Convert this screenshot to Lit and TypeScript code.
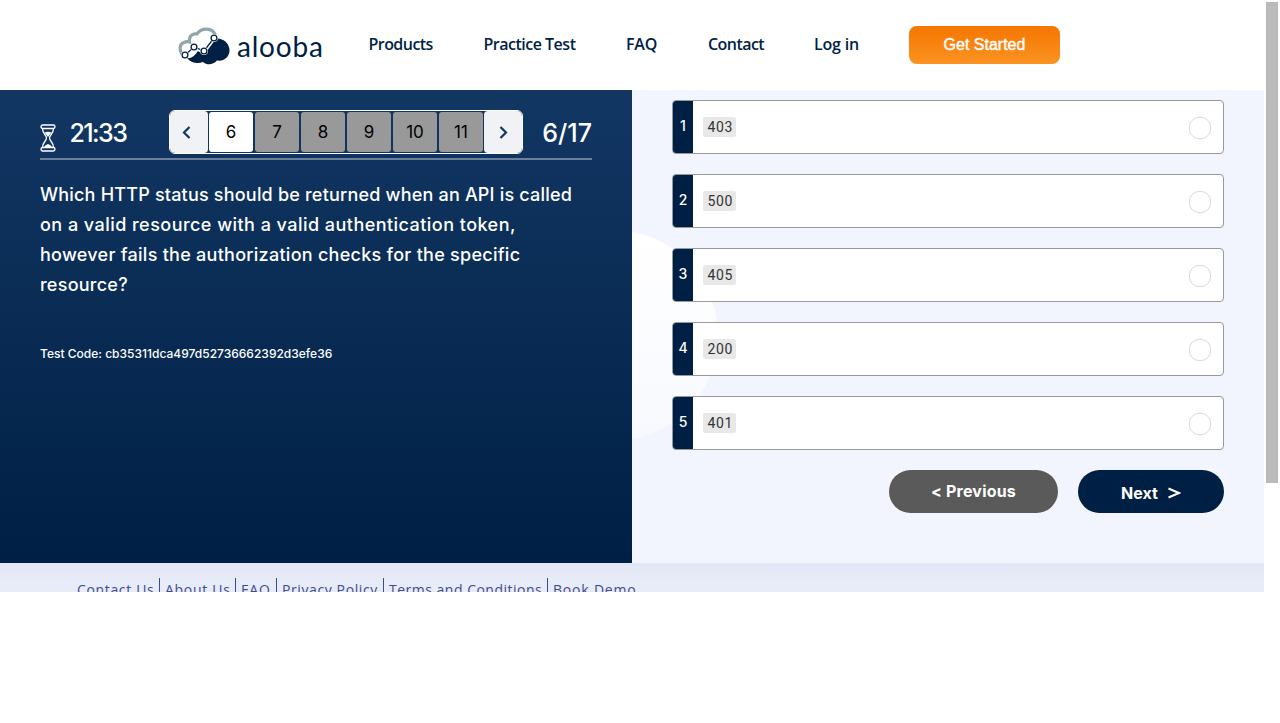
import { LitElement, html, css, svg } from "lit";
import { customElement } from "lit/decorators.js";

@customElement("app-header")
class AppHeader extends LitElement {
  static styles = css`
    :host { display: flex; height: 90px; background: #fff; box-sizing: border-box; padding-left: 178px; align-items: center; color: #001f44; }
    .logo { display: flex; align-items: center; width: 190.5px; padding-top: 1px; }
    .mark { width: 52px; height: 40px; display: block; }
    .word { font: 400 28px/40px Lato, sans-serif; letter-spacing: 0.8px; margin: 1px 0 0 7px; }
    nav { display: flex; font: 600 16px/24px "Open Sans", sans-serif; gap: 50px; padding-bottom: 2px; white-space: nowrap; }
    .n1 { width: 65px; letter-spacing: -0.55px; } .n2 { width: 92.5px; letter-spacing: -0.5px; }
    .n3 { width: 32px; letter-spacing: -0.2px; } .n4 { width: 56px; letter-spacing: -0.55px; } .n5 { width: 45px; letter-spacing: -0.2px; }
    .cta { margin-left: 50px; width: 151px; height: 38px; border: 0; padding: 0; border-radius: 8px; color: #fff; background: linear-gradient(#f57600, #fb9322); font: 400 16px "Liberation Sans", sans-serif; -webkit-text-stroke: 0.4px #fff; }
  `;
  render() {
    return html`
      <div class="logo">
        <svg class="mark" viewBox="0 0 52 40">
          <path d="M5 29C1 25 1 18 6 16.500C8 15.500 10 15.500 11.500 16C10.500 10 15 7 19 8C23 1.500 34 1 37.500 9" fill="none" stroke="#90a4ab" stroke-width="3.200"/>
          <path d="M9 32C14 33 17 29 20 25L26 28L34 17L39 12.500C46 12.500 51.500 18 51.500 24.500C51.500 31 46 35.500 39 34.500C35 39 29 39.500 25 36C19 38 13 37 9 32Z" fill="#001f44"/>
          <path d="M7 29L16 21L26 25L36 12" fill="none" stroke="#fff" stroke-width="4.500"/>
          <path d="M7 29L16 21L26 25L36 12" fill="none" stroke="#001f44" stroke-width="1.300"/>
          ${[[7, 29], [16, 21], [26, 25], [36, 12]].map(([x, y]) => svg`<circle cx=${x} cy=${y} r="4" fill="#fff"/><circle cx=${x} cy=${y} r="2.9" fill="#fff" stroke="#001f44" stroke-width="1.3"/>`)}
        </svg>
        <span class="word">alooba</span>
      </div>
      <nav><span class="n1">Products</span><span class="n2">Practice Test</span><span class="n3">FAQ</span><span class="n4">Contact</span><span class="n5">Log in</span></nav>
      <button class="cta">Get Started</button>`;
  }
}

@customElement("question-panel")
class QuestionPanel extends LitElement {
  static styles = css`
    :host { display: block; width: 632px; height: 473px; box-sizing: border-box; padding: 20px 40px 0; color: #fff; background: linear-gradient(#123763, #001f44); font-family: Inter, sans-serif; white-space: nowrap; }
    .bar { display: flex; height: 50px; border-bottom: 2px solid #6b809b; box-sizing: border-box; }
    .glass { width: 16px; height: 28px; margin-top: 14px; }
    .time { margin-left: 13.5px; width: 99.5px; font: 500 25px/46px Inter, sans-serif; letter-spacing: -1.6px; }
    .pager { display: flex; width: 354px; height: 44px; box-sizing: border-box; border: 1px solid #fff; border-radius: 6px; overflow: hidden; }
    .arrow { width: 38px; height: 42px; box-sizing: border-box; background: #f0f2f5; border-radius: 4px; display: flex; align-items: center; justify-content: center; }
    .left { padding-right: 5px; }
    .cells { display: flex; gap: 2px; padding: 1px; }
    .cell { width: 44px; height: 40px; border-radius: 3px; background: #999; color: #000; font: 400 17px/41px Inter, sans-serif; text-align: center; }
    .on { background: #fff; }
    .count { margin-left: auto; font: 500 25px/46px Inter, sans-serif; }
    .q { margin: 20px 0 0; font: 500 18px/30px Inter, sans-serif; }
    .l1 { letter-spacing: 0.2px; } .l2 { letter-spacing: 0.46px; } .l3 { letter-spacing: 0.27px; } .l4 { letter-spacing: 0.25px; }
    .code { margin-top: 45px; font-size: 12px; line-height: 18px; font-weight: 500; letter-spacing: 0.01px; }
  `;
  render() {
    const lines = ["Which HTTP status should be returned when an API is called", "on a valid resource with a valid authentication token,", "however fails the authorization checks for the specific", "resource?"];
    return html`
      <div class="bar">
        <svg class="glass" viewBox="0 0 16 28" fill="none" stroke="#fff" stroke-width="1.300">
          <rect x="1" y="1" width="14" height="3.500" rx="1.700"/><rect x="1" y="23.500" width="14" height="3.500" rx="1.700"/>
          <path d="M2.500 4.500C2.500 10 6.500 11 6.500 14S2.500 18 2.500 23.500M13.500 4.500C13.500 10 9.500 11 9.500 14S13.500 18 13.500 23.500"/>
          <path d="M4.500 8.500Q8 7 11.500 8.500L8 13ZM3.500 24Q4.500 21 8 20Q11.500 21 12.500 24Z" fill="#fff" stroke="none"/>
        </svg>
        <span class="time">21:33</span>
        <div class="pager">
          <div class="arrow left"><svg width="12" height="14" viewBox="0 0 12 14"><path d="M8.500 2L3 7.500L8.500 13" fill="none" stroke="#123763" stroke-width="2.200"/></svg></div>
          <div class="cells">${["6", "7", "8", "9", "10", "11"].map((n, i) => html`<div class="cell ${i ? "" : "on"}">${n}</div>`)}</div>
          <div class="arrow"><svg width="12" height="14" viewBox="0 0 12 14"><path d="M3.500 2L9 7.500L3.500 13" fill="none" stroke="#123763" stroke-width="2.200"/></svg></div>
        </div>
        <span class="count">6/17</span>
      </div>
      <div class="q">${lines.map((t, i) => html`<div><span class="l${i + 1}">${t}</span></div>`)}</div>
      <div class="code">Test Code: cb35311dca497d52736662392d3efe36</div>`;
  }
}

@customElement("answer-panel")
class AnswerPanel extends LitElement {
  static styles = css`
    :host { display: block; position: relative; width: 632px; height: 473px; box-sizing: border-box; padding: 10px 40px 0; background: #f2f5fd; overflow: hidden; }
    .disc { position: absolute; left: -124px; top: 140px; width: 210px; height: 211px; border-radius: 50%; background: linear-gradient(#fff, #f7f9fe); }
    .list { position: relative; display: grid; gap: 20px; }
    .opt { display: flex; height: 54px; box-sizing: border-box; border: 1px solid #999; border-radius: 4px; background: #fff; align-items: center; overflow: hidden; }
    .num { align-self: stretch; width: 20px; background: #001f44; color: #fff; font: 500 14px/50px Inter, sans-serif; text-align: center; }
    code { margin-left: 10px; width: 33px; height: 20px; border-radius: 2px; background: #e8e8e8; color: #333; font: 400 14px/21px Roboto, sans-serif; letter-spacing: 0.6px; text-indent: 4.5px; }
    .radio { margin: 2px 12px 0 auto; width: 22px; height: 22px; box-sizing: border-box; border: 1px solid #d8d8d8; border-radius: 10px; }
    .actions { position: relative; display: flex; justify-content: flex-end; gap: 20px; margin-top: 20px; }
    button { height: 43px; border: 0; padding: 0; border-radius: 22px; color: #fff; font: 700 16px Inter, sans-serif; display: flex; align-items: center; justify-content: center; }
    .prev { width: 169px; background: #5a5a5a; letter-spacing: 0.2px; padding-bottom: 1px; }
    .next { width: 146px; background: #001f44; padding-top: 3px; gap: 9px; }
  `;
  render() {
    return html`<div class="disc"></div>
      <div class="list">${["403", "500", "405", "200", "401"].map((c, i) => html`<div class="opt"><span class="num">${i + 1}</span><code>${c}</code><span class="radio"></span></div>`)}</div>
      <div class="actions"><button class="prev">&lt; Previous</button><button class="next"><span>Next</span><svg width="14" height="13" viewBox="0 0 14 13"><path d="M1.500 1.500L12 6L1.500 10.500" fill="none" stroke="#fff" stroke-width="2"/></svg></button></div>`;
  }
}

@customElement("app-footer")
class AppFooter extends LitElement {
  static styles = css`
    :host { display: flex; height: 29px; overflow: hidden; box-sizing: border-box; padding: 15px 0 0 77px; background: linear-gradient(#e3e8f6, #e9ecf8); font: 400 14px/24px "Open Sans", sans-serif; color: #3d4b8f; white-space: nowrap; }
    span { height: 24px; flex: none; box-sizing: border-box; }
    span + span { border-left: 1px solid #3d4b8f; padding-left: 5px; }
    .f1 { width: 82px; letter-spacing: 0.65px; } .f2 { width: 76px; letter-spacing: 0.7px; } .f3 { width: 41px; letter-spacing: 1px; }
    .f4 { width: 107px; letter-spacing: 0.6px; } .f5 { width: 164px; letter-spacing: 0.5px; } .f6 { letter-spacing: 0.8px; }
  `;
  render() {
    return html`${["Contact Us", "About Us", "FAQ", "Privacy Policy", "Terms and Conditions", "Book Demo"].map((t, i) => html`<span class="f${i + 1}">${t}</span>`)}`;
  }
}

@customElement("app-root")
class AppRoot extends LitElement {
  static styles = css`
    :host { display: flex; height: 723px; overflow: hidden; background: #fff; }
    .page { width: 1264px; }
    .main { display: flex; }
    .scroll { margin: 2px 0 0 2px; width: 12px; height: 481px; background: #bababa; }
  `;
  render() {
    return html`<div class="page"><app-header></app-header><div class="main"><question-panel></question-panel><answer-panel></answer-panel></div><app-footer></app-footer></div><div class="scroll"></div>`;
  }
}
